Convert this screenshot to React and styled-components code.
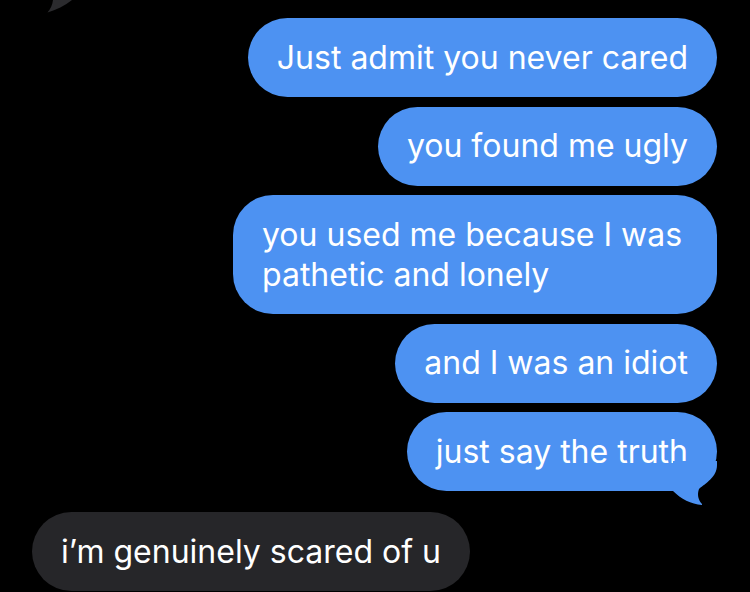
import React from "react";
import styled, { createGlobalStyle } from "styled-components";

const GlobalStyle = createGlobalStyle`
  html, body {
    margin: 0;
    padding: 0;
    background: #000;
  }
  body {
    font-family: Inter, "Liberation Sans", sans-serif;
    -webkit-font-smoothing: antialiased;
  }
`;

const Screen = styled.div`
  width: 750px;
  height: 592px;
  overflow: hidden;
  background: #000;
  display: flex;
  flex-direction: column;
`;

const TopTailRow = styled.div`
  height: 18px;
  padding-left: 46px;
  display: flex;
  align-items: flex-start;

  svg {
    display: block;
  }
`;

const Thread = styled.div`
  display: flex;
  flex-direction: column;
  gap: 9.5px;
  padding: 0 33px 0 32px;
`;

const Bubble = styled.div`
  position: relative;
  align-self: ${(p) => (p.$from === "me" ? "flex-end" : "flex-start")};
  max-width: ${(p) => p.$maxWidth || "none"};
  box-sizing: border-box;
  padding: 19.5px 29px 19.5px 29px;
  border-radius: 40px;
  background: ${(p) => (p.$from === "me" ? "#4d92f2" : "#262629")};
  color: #fff;
  font-size: 32px;
  line-height: 40px;
  margin-top: ${(p) => p.$gapAbove || "0"};
`;

const Tail = styled.svg`
  position: absolute;
  right: 0;
  bottom: -14px;
  width: 50px;
  height: 44px;
  display: block;
`;

const messages = [
  { from: "me", text: "Just admit you never cared" },
  { from: "me", text: "you found me ugly" },
  { from: "me", text: "you used me because I was pathetic and lonely", maxWidth: "484px" },
  { from: "me", text: "and I was an idiot" },
  { from: "me", text: "just say the truth", tail: true },
  { from: "them", text: "i’m genuinely scared of u", gapAbove: "11.5px" },
];

const App = () => {
  return (
    <>
      <GlobalStyle />
      <Screen>
        <TopTailRow>
          <svg width="30" height="14" viewBox="46 0 30 14">
            <path d="M53,0 C52.5,5 50.5,9 47.5,12.5 C56,10 65,5.5 72,0 Z" fill="#2b2b2e" />
          </svg>
        </TopTailRow>
        <Thread>
          {messages.map((m, i) => (
            <Bubble key={i} $from={m.from} $maxWidth={m.maxWidth} $gapAbove={m.gapAbove}>
              {m.text}
              {m.tail && (
                <Tail viewBox="0 0 50 44">
                  <path
                    d="M50,0 L50,4 C50,16 39,22 32,28 C30,33 31,39 35,43 L35,44 C24,43 14,38 6,30 L6,0 Z"
                    fill="#4d92f2"
                  />
                </Tail>
              )}
            </Bubble>
          ))}
        </Thread>
      </Screen>
    </>
  );
};

export default App;
